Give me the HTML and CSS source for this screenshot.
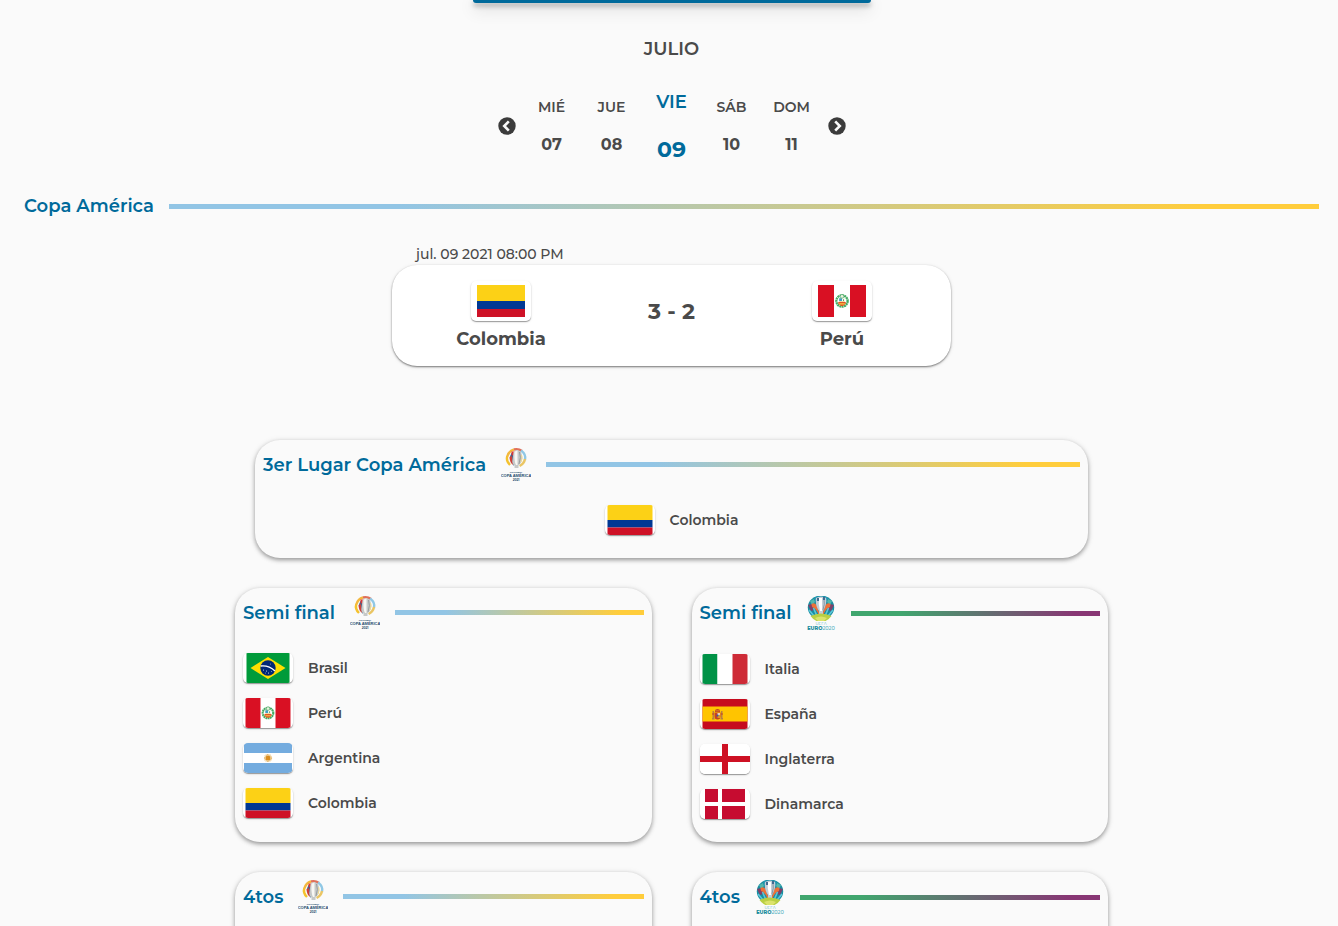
FILE: index.html
```html
<!DOCTYPE html>
<html lang="es">
<head>
<meta charset="utf-8">
<meta name="viewport" content="width=device-width, initial-scale=1">
<title>Copa América</title>
<link rel="stylesheet" href="styles.css">
</head>
<body>
<svg class="defs" aria-hidden="true">
  <defs>
    <symbol id="peru-arms" viewBox="0 0 16 16">
      <circle cx="8" cy="8" r="6" fill="none" stroke="#45ac63" stroke-width="2.500" stroke-dasharray="2 .5"/>
      <path d="M5 5h6v4.500q0 3-3 3t-3-3z" fill="#f3d9a0"/>
      <path d="M5 5h3v3H5z" fill="#3f9ec9"/><path d="M8 5h3v3H8z" fill="#fff"/>
      <path d="M9 6h1v2H9z" fill="#42984f"/>
      <path d="M4 9h8v2q-2 2.500-4 2.500T4 11z" fill="#df5727"/>
      <path d="M5 10.500h6v1.200H5z" fill="#f6c945"/>
      <circle cx="8" cy="3" r="2" fill="#e9f5df" stroke="#42a05e" stroke-width=".7"/>
    </symbol>
    <symbol id="colombia" viewBox="0 0 48 32">
      <path fill="#fcd116" d="M0 0h48v16H0z"/><path fill="#003893" d="M0 16h48v8H0z"/><path fill="#ce1126" d="M0 24h48v8H0z"/>
    </symbol>
    <symbol id="peru" viewBox="0 0 48 32">
      <path fill="#fff" d="M0 0h48v32H0z"/><path fill="#d91023" d="M0 0h16v32H0zM32 0h16v32H32z"/>
      <use href="#peru-arms" x="16.500" y="8.500" width="15" height="15"/>
    </symbol>
    <symbol id="brasil" viewBox="0 0 43 30">
      <path fill="#009b3a" d="M0 0h43v30H0z"/><path fill="#fedf00" d="M4 15 21.500 4 39 15 21.500 26z"/>
      <circle cx="21.500" cy="15" r="7.700" fill="#002776"/>
      <path d="M14.200 13q8-1 14.300 5" fill="none" stroke="#fff" stroke-width="1.300"/>
      <g fill="#fff"><circle cx="17" cy="17" r=".5"/><circle cx="20" cy="18" r=".5"/><circle cx="22" cy="20" r=".5"/><circle cx="25" cy="18.500" r=".4"/><circle cx="19" cy="20" r=".4"/><circle cx="24" cy="11" r=".4"/></g>
    </symbol>
    <symbol id="argentina" viewBox="0 0 48 30">
      <path fill="#74acdf" d="M0 0h48v30H0z"/><path fill="#fff" d="M0 10h48v10H0z"/>
      <circle cx="24" cy="15" r="3.300" fill="none" stroke="#e3b35e" stroke-width="1.600" stroke-dasharray=".8 .5"/><circle cx="24" cy="15" r="2.500" fill="#d98d20"/>
    </symbol>
    <symbol id="italia" viewBox="0 0 45 30">
      <path fill="#009246" d="M0 0h15v30H0z"/><path fill="#fff" d="M15 0h15v30H15z"/><path fill="#ce2b37" d="M30 0h15v30H30z"/>
    </symbol>
    <symbol id="espana" viewBox="0 0 45 30">
      <path fill="#c60b1e" d="M0 0h45v30H0z"/><path fill="#ffc400" d="M0 7.500h45v15H0z"/>
      <path fill="#b78043" d="M10 12h1.500v8H10zM18.500 12H20v8h-1.500zM9.500 19h2.500v1.500H9.500zM18 19h2.500v1.500H18z"/>
      <path fill="#c44126" d="M12 13.500h6v4q0 3-3 3t-3-3zM9.500 14.500h2v1h-2zM18.500 14.500h2v1h-2zM12.500 12q0-2 2.500-2t2.500 2v1h-5z"/>
      <path fill="#e8d7be" d="M15 14h2.500v2.500H15z"/><path fill="#d99923" d="M15 16.500h2.500V19H15zM13 11.500h4v.7h-4z"/><circle cx="15" cy="16.500" r="1" fill="#335ca5"/>
    </symbol>
    <symbol id="inglaterra" viewBox="0 0 50 30">
      <path fill="#fff" d="M0 0h50v30H0z"/><path fill="#ce1124" d="M22 0h6v30h-6zM0 12h50v6H0z"/>
    </symbol>
    <symbol id="dinamarca" viewBox="0 0 40 30">
      <path fill="#c60c30" d="M0 0h40v30H0z"/><path fill="#fff" d="M13 0h4v30h-4zM0 13h40v4H0z"/>
    </symbol>
    <symbol id="copa" viewBox="0 0 30 33">
      <g fill="none" stroke-width="2.400">
        <path d="M9 17Q4.800 13 6.300 8" stroke="#f4c22d"/>
        <path d="M6.300 8.500Q8 2.800 13 1.500" stroke="#f3b83f"/>
        <path d="M13 1.500q4.500-1 8 1.500" stroke="#e0705a"/>
        <path d="M20 2.500q5.500 4 4 9.500" stroke="#90c8e5"/>
        <path d="M24 11q-.8 4.500-5.400 7" stroke="#eac563"/>
      </g>
      <path d="M10.500 5q-3 5 .5 10l2 3V4z" fill="#2c6493"/><path d="M8.500 9q0 5 3.500 8l-1-9z" fill="#cf3f35"/><path d="M10.500 3.500h3v4h-3z" fill="#db3636"/>
      <path d="M12.500 4q3.500-4 7.500 0 2 4 1 8-.5 3-3.500 5.500v2.500h-4v-2.500q-3-2-2-6z" fill="#c6c9c8"/>
      <path d="M13.500 4q1-1.500 3-1.500V17h-1.500q-2-3-1.500-13z" fill="#f7f7f3"/><path d="M18.500 4q2 5-.5 12" fill="none" stroke="#979d9e"/>
      <path d="M20.500 7q1.500 3-.5 7" fill="none" stroke="#f0db8e"/>
      <text class="logo-copa-small" x="15" y="24.500">CONMEBOL</text>
      <text class="logo-copa" x="15" y="29">COPA AMÉRICA</text>
      <text class="logo-copa-year" x="15" y="33">2021</text>
    </symbol>
    <symbol id="euro" viewBox="0 0 30 34">
      <ellipse cx="15" cy="11.500" rx="13.200" ry="12" fill="#178da0"/>
      <path d="M8 1.500q7-2.500 14 0l-2 5H10z" fill="#2799b4"/>
      <path d="M2 9l4-1 2 6-3 1zM28 9l-4-1-2 6 3 1z" fill="#7d416b"/>
      <path d="M4 5l4-2 1 3-3 3zM26 5l-4-2-1 3 3 3z" fill="#54b8ac"/>
      <path d="M5.500 8q3-2 5 1l2.500 7v4q-2-7-7-9zM24.500 8q-3-2-5 1L17 16v4q2-7 7-9z" fill="#ee7138"/>
      <path d="M3 14l5 6M27 14l-5 6M7.500 12l3 7M22.500 12l-3 7" stroke="#5cc5d8" stroke-width="1.600"/>
      <path d="M10 2q5-3 10 0 1 5-1 9-1 3-2 4v5h-4v-5q-4-5-3-13z" fill="#c3ced7"/>
      <path d="M13 2h3v13h-2q-2-7-1-13z" fill="#fff"/><path d="M18 3q1 5-1 11" fill="none" stroke="#8795a1"/>
      <path d="M11 2h2v3h-2zM17 1h2v3h-2z" fill="#416c91"/>
      <path d="M4.500 20q10.500-5 21 0-3 4-6 5h-9q-4-2-6-5z" fill="#b9cf43"/><path d="M9 22q6-3 12 0l-3 3h-6z" fill="#dbe36b"/>
      <text class="logo-uefa" x="15" y="28.500">UEFA</text>
      <text class="logo-euro" x="15" y="34">EURO<tspan class="logo-euro-year">2020</tspan></text>
    </symbol>
  </defs>
</svg>

<main class="page">
  <button class="main-action" type="button" aria-label="Partidos"></button>
  <h1 class="month">JULIO</h1>

  <nav class="days" aria-label="Fecha">
    <button class="arrow" type="button" aria-label="Anterior"><svg viewBox="0 0 18 18"><circle cx="9" cy="9" r="8.700" fill="#3b3b3b"/><path d="M10.800 4.300 6.200 9l4.600 4.700" fill="none" stroke="#fafafa" stroke-width="2.600"/></svg></button>
    <button class="day" type="button"><span class="day-name">MIÉ</span><span class="day-number">07</span></button>
    <button class="day" type="button"><span class="day-name">JUE</span><span class="day-number">08</span></button>
    <button class="day active" type="button"><span class="day-name">VIE</span><span class="day-number">09</span></button>
    <button class="day" type="button"><span class="day-name">SÁB</span><span class="day-number">10</span></button>
    <button class="day" type="button"><span class="day-name">DOM</span><span class="day-number">11</span></button>
    <button class="arrow" type="button" aria-label="Siguiente"><svg viewBox="0 0 18 18"><circle cx="9" cy="9" r="8.700" fill="#3b3b3b"/><path d="M7.200 4.300 11.800 9l-4.600 4.700" fill="none" stroke="#fafafa" stroke-width="2.600"/></svg></button>
  </nav>

  <header class="heading"><h2 class="title">Copa América</h2><span class="bar"></span></header>

  <section class="match">
    <time class="match-date" datetime="2021-07-09T20:00">jul. 09 2021 08:00 PM</time>
    <div class="match-card">
      <div class="team"><span class="flag large"><svg><use href="#colombia"/></svg></span><span class="team-name">Colombia</span></div>
      <strong class="score">3 - 2</strong>
      <div class="team"><span class="flag large"><svg><use href="#peru"/></svg></span><span class="team-name">Perú</span></div>
    </div>
  </section>

  <section class="card third">
    <header class="heading"><h2 class="title">3er Lugar Copa América</h2><svg class="logo"><use href="#copa"/></svg><span class="bar"></span></header>
    <ul class="teams centered"><li class="row"><span class="flag"><svg><use href="#colombia"/></svg></span>Colombia</li></ul>
  </section>

  <div class="rounds">
    <section class="card">
      <header class="heading"><h2 class="title">Semi final</h2><svg class="logo"><use href="#copa"/></svg><span class="bar"></span></header>
      <ul class="teams">
        <li class="row"><span class="flag"><svg><use href="#brasil"/></svg></span>Brasil</li>
        <li class="row"><span class="flag"><svg><use href="#peru"/></svg></span>Perú</li>
        <li class="row"><span class="flag"><svg><use href="#argentina"/></svg></span>Argentina</li>
        <li class="row"><span class="flag"><svg><use href="#colombia"/></svg></span>Colombia</li>
      </ul>
    </section>
    <section class="card">
      <header class="heading"><h2 class="title">Semi final</h2><svg class="logo euro"><use href="#euro"/></svg><span class="bar euro"></span></header>
      <ul class="teams">
        <li class="row"><span class="flag"><svg><use href="#italia"/></svg></span>Italia</li>
        <li class="row"><span class="flag"><svg><use href="#espana"/></svg></span>España</li>
        <li class="row"><span class="flag"><svg><use href="#inglaterra"/></svg></span>Inglaterra</li>
        <li class="row"><span class="flag"><svg><use href="#dinamarca"/></svg></span>Dinamarca</li>
      </ul>
    </section>
    <section class="card upcoming">
      <header class="heading"><h2 class="title">4tos</h2><svg class="logo"><use href="#copa"/></svg><span class="bar"></span></header>
    </section>
    <section class="card upcoming">
      <header class="heading"><h2 class="title">4tos</h2><svg class="logo euro"><use href="#euro"/></svg><span class="bar euro"></span></header>
    </section>
  </div>
</main>
</body>
</html>
```
FILE: styles.css
```css
* { box-sizing: border-box; }

body {
  margin: 0;
  background: #fafafa;
  color: #4a4a4a;
  font-family: Montserrat, Inter, sans-serif;
}

button {
  border: 0;
  padding: 0;
  background: none;
  color: inherit;
  font: inherit;
  cursor: pointer;
}

.defs { position: absolute; width: 0; height: 0; }

.page {
  display: flex;
  flex-direction: column;
  align-items: center;
  height: 100vh;
  overflow: hidden;
  padding: 0 19px 0 24px;
}

.page > * { flex-shrink: 0; }

.main-action {
  width: 100%;
  max-width: 398px;
  height: 3px;
  border-radius: 0 0 4px 4px;
  background: #006a9b;
  box-shadow: 0 3px 5px rgba(0, 0, 0, .35), 0 5px 16px rgba(0, 0, 0, .3);
}

.month {
  margin: 34px 0 29px;
  font-size: 18px;
  font-weight: 600;
  line-height: 24px;
}

.days { display: flex; align-items: center; gap: 6px; height: 72px; }

.arrow { width: 24px; height: 24px; }
.arrow svg { display: block; width: 18px; height: 18px; margin: 0 auto; }

.day {
  display: flex;
  flex-direction: column;
  align-items: center;
  gap: 18px;
  width: 54px;
  line-height: 20px;
}

.day-name { font-size: 14px; font-weight: 600; }
.day-number { font-size: 16px; font-weight: 700; }
.day.active { gap: 28px; color: #006a9b; }
.active .day-name { font-size: 18px; }
.active .day-number { font-size: 22px; }

.heading { display: flex; align-items: center; gap: 15px; width: 100%; }
.title { margin: 0; color: #006a9b; font-size: 18px; font-weight: 600; line-height: 24px; }
.page > .heading { margin-top: 32px; }

.bar { flex: 1; height: 5px; background: linear-gradient(90deg, #92c5e5 20%, #ffcd3c 90%); }
.bar.euro { background: linear-gradient(90deg, #40a66e 20%, #883674 90%); }

.logo { width: 30px; height: 33px; flex: none; }
.logo.euro { height: 34px; }

.match { width: 100%; max-width: 559px; margin-top: 26px; }
.match-date { display: block; padding-left: 24px; font-size: 14px; font-weight: 500; line-height: 21px; }

.match-card {
  display: grid;
  grid-template-columns: 218px 1fr 218px;
  align-items: center;
  padding: 16px 0 15px;
  border-radius: 25px;
  background: #fff;
  box-shadow: 0 1px 2px rgba(0, 0, 0, .5), 0 1px 5px rgba(0, 0, 0, .08);
}

.team { display: flex; flex-direction: column; align-items: center; gap: 6px; }
.team-name { font-size: 18px; font-weight: 700; line-height: 24px; }
.score { text-align: center; font-size: 22px; font-weight: 700; line-height: 24px; padding-bottom: 8px; }

.flag {
  flex: none;
  width: 50px;
  height: 30px;
  overflow: hidden;
  border-radius: 5px;
  background: #fff;
  box-shadow: 0 1px 1px rgba(0, 0, 0, .35), 0 1px 3px rgba(0, 0, 0, .1);
}
.flag svg { display: block; width: 100%; height: 100%; }
.flag.large { width: 60px; height: 40px; padding: 4px 6px; }

.card {
  padding: 8px;
  border-radius: 25px;
  background: #fafafa;
  box-shadow: 0 2px 4px rgba(0, 0, 0, .35), 0 1px 7px rgba(0, 0, 0, .1);
}
.third { width: 100%; max-width: 833px; margin: 74px 0 30px; }

.rounds {
  display: grid;
  grid-template-columns: 1fr 1fr;
  gap: 30px 40px;
  width: 100%;
  max-width: 873px;
}
.upcoming { min-height: 254px; }

.teams { margin: 24px 0 0; padding: 0; list-style: none; }
.row { display: flex; align-items: center; gap: 15px; height: 30px; margin-bottom: 15px; font-size: 14px; font-weight: 600; }
.centered .row { justify-content: center; }

.logo-copa, .logo-copa-small, .logo-copa-year { fill: #294d70; font-weight: 700; text-anchor: middle; }
.logo-copa { font-size: 4px; font-family: "Liberation Sans", Arial, sans-serif; }
.logo-copa-small { font-size: 2px; }
.logo-copa-year { font-size: 3px; }
.logo-uefa { fill: #66b9c6; font-size: 4px; text-anchor: middle; }
.logo-euro { fill: #168b9d; font-size: 5px; font-weight: 800; text-anchor: middle; }
.logo-euro-year { fill: #4daec0; font-weight: 500; }
```
